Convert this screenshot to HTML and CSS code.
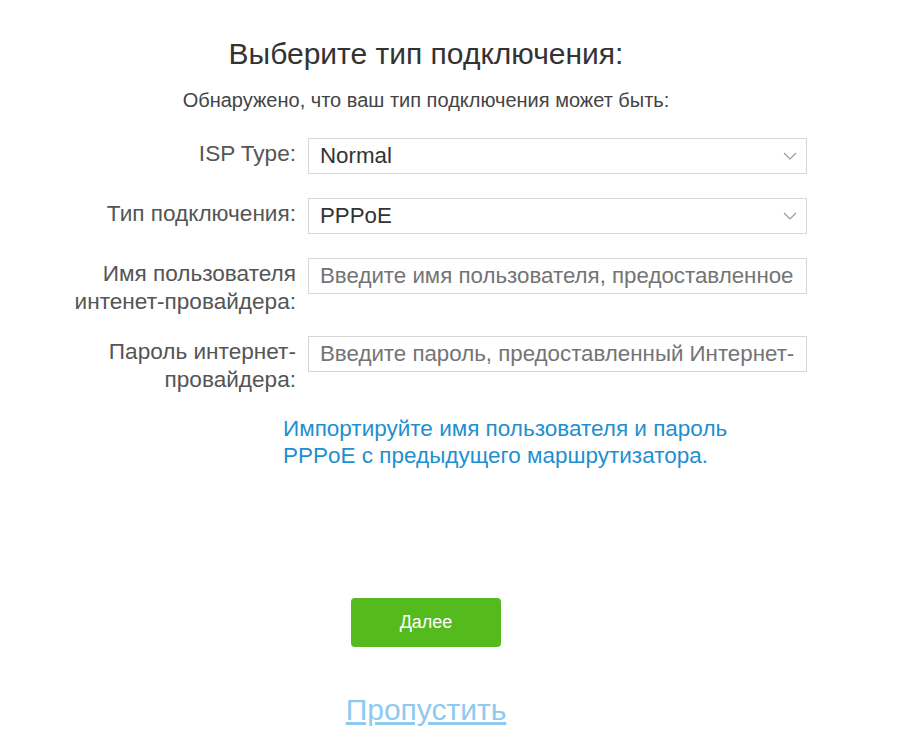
FILE: index.html
```html
<!DOCTYPE html>
<html lang="ru">
<head>
  <meta charset="UTF-8" />
  <title>Быстрая настройка | Тип подключения</title>
  <meta name="viewport" content="width=device-width, initial-scale=1.0" />
  <link rel="stylesheet" href="styles.css">
</head>
<body>
  <div class="wizard">
    <h1>Выберите тип подключения:</h1>
    <p class="detected">Обнаружено, что ваш тип подключения может быть:</p>

    <div class="form">
      <div class="row">
        <label>ISP Type:</label>
        <div class="select">
          <span>Normal</span>
          <svg width="14" height="8" viewBox="0 0 14 8"><path d="M1 1l6 6 6-6" fill="none" stroke="#9a9a9a" stroke-width="1.2"/></svg>
        </div>
      </div>

      <div class="row">
        <label>Тип подключения:</label>
        <div class="select">
          <span>PPPoE</span>
          <svg width="14" height="8" viewBox="0 0 14 8"><path d="M1 1l6 6 6-6" fill="none" stroke="#9a9a9a" stroke-width="1.2"/></svg>
        </div>
      </div>

      <div class="row">
        <label for="user">Имя пользователя интенет-провайдера:</label>
        <input id="user" type="text" placeholder="Введите имя пользователя, предоставленное Интернет-провайдером">
      </div>

      <div class="row">
        <label for="pass">Пароль интернет-провайдера:</label>
        <input id="pass" type="text" placeholder="Введите пароль, предоставленный Интернет-провайдером">
      </div>
    </div>

    <p class="import">Импортируйте имя пользователя и пароль PPPoE с предыдущего маршрутизатора.</p>

    <button class="next">Далее</button>

    <a class="skip" href="#">Пропустить</a>
  </div>
</body>
</html>
```

FILE: styles.css
```css
body {
  margin: 0;
  background: #fff;
  font-family: "Liberation Sans", Arial, sans-serif;
  color: #4a4a4a;
}
.wizard {
  width: 852px;
  text-align: center;
}
h1 {
  font-size: 30px;
  line-height: 36px;
  font-weight: normal;
  color: #333;
  margin: 36px 0 0;
}
.detected {
  font-size: 20px;
  line-height: 24px;
  color: #444;
  margin: 16px 0 0;
}
.form {
  display: flex;
  flex-direction: column;
  gap: 20px;
  margin-top: 26px;
  text-align: left;
}
.row {
  display: flex;
  align-items: flex-start;
  min-height: 40px;
}
.row label {
  width: 232px;
  margin-left: 64px;
  margin-right: 12px;
  padding-top: 2px;
  text-align: right;
  font-size: 22.6px;
  line-height: 28px;
  color: #555;
}
.select, .row input {
  box-sizing: border-box;
  width: 499px;
  height: 36px;
  border: 1px solid #d6d6d6;
  background: #fff;
  font-family: inherit;
  font-size: 22.3px;
  color: #333;
  padding: 0 9px 0 11px;
}
.select {
  display: flex;
  align-items: center;
  justify-content: space-between;
}
.row input {
  outline: none;
  padding-right: 11px;
}
.row input::placeholder {
  color: #747474;
}
.import {
  width: 470px;
  margin: 21px 0 0 283px;
  text-align: left;
  font-size: 22.5px;
  line-height: 27px;
  color: #1f8fd0;
}
.next {
  display: block;
  width: 150px;
  height: 49px;
  margin: 129px 0 0 351px;
  border: none;
  border-radius: 4px;
  background: #55ba1d;
  color: #fff;
  font-family: inherit;
  font-size: 18px;
  cursor: pointer;
}
.skip {
  display: inline-block;
  margin-top: 45px;
  font-size: 30px;
  line-height: 36px;
  color: #8ecaf0;
}
```
